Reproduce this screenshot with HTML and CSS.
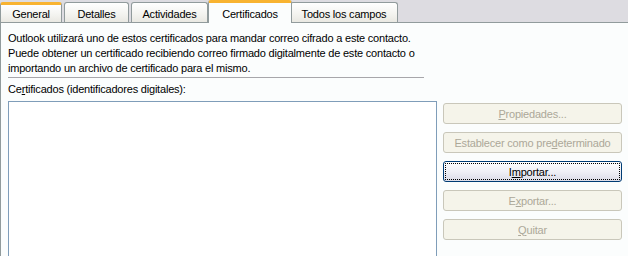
FILE: index.html
```html
<!DOCTYPE html>
<html lang="es">
<head>
<meta charset="utf-8">
<title>Certificados</title>
<link rel="stylesheet" href="styles.css">
</head>
<body>
<div class="tabs">
  <div class="tab hover">General</div>
  <div class="tab">Detalles</div>
  <div class="tab">Actividades</div>
  <div class="tab selected">Certificados</div>
  <div class="tab">Todos los campos</div>
</div>
<div class="panel">
  <p class="intro">Outlook utilizará uno de estos certificados para mandar correo cifrado a este contacto.<br>Puede obtener un certificado recibiendo correo firmado digitalmente de este contacto o<br>importando un archivo de certificado para el mismo.</p>
  <hr class="sep">
  <div class="label">Ce<u>r</u>tificados (identificadores digitales):</div>
  <div class="main">
    <div class="list"></div>
    <div class="buttons">
      <button class="btn" disabled><u>P</u>ropiedades...</button>
      <button class="btn" disabled>Establecer como pre<u>d</u>eterminado</button>
      <button class="btn focus">I<u>m</u>portar...</button>
      <button class="btn" disabled>E<u>x</u>portar...</button>
      <button class="btn" disabled><u>Q</u>uitar</button>
    </div>
  </div>
</div>
</body>
</html>
```
FILE: styles.css
```css
html, body {
  margin: 0;
  padding: 0;
  height: 256px;
  overflow: hidden;
}
body {
  font-family: "Liberation Sans", Arial, sans-serif;
  font-size: 11px;
  letter-spacing: -0.2px;
  color: #000;
  background: #fbfdfd;
}
.tabs {
  display: flex;
  align-items: flex-end;
  height: 23px;
  background: #dddce1;
  border-bottom: 1px solid #919b9c;
  box-sizing: border-box;
}
.tab {
  box-sizing: border-box;
  height: 20px;
  margin-right: 2px;
  padding: 5px 0 0;
  line-height: 13px;
  border: 1px solid #919b9c;
  border-bottom: none;
  border-radius: 3px 3px 0 0;
  background: linear-gradient(#ffffff, #f3f3ef 60%, #e9e8e2);
  text-align: center;
  white-space: nowrap;
}
.tab:nth-child(1) { width: 62px; }
.tab:nth-child(2) { width: 65px; }
.tab:nth-child(3) { width: 77px; }
.tab:nth-child(5) { width: 108px; }
.tab.hover {
  border-top: 3px solid #f8b330;
  padding-top: 3px;
}
.tab.selected {
  width: 84px;
  height: 23px;
  margin: 0 0 -1px -2px;
  padding-top: 5px;
  background: #fbfdfd;
  border-top: 3px solid #f8b330;
  position: relative;
  z-index: 1;
}
.tab.selected + .tab { margin-left: -2px; }
.panel {
  border-left: 1px solid #919b9c;
  padding: 8px 0 0 7px;
  height: 233px;
  box-sizing: border-box;
}
.intro {
  margin: 0;
  line-height: 15px;
}
.sep {
  width: 416px;
  margin: 1px 0 0 0;
  border: none;
  border-top: 1px solid #a7a6aa;
  height: 0;
}
.label {
  margin-top: 4px;
  line-height: 15px;
}
.main {
  display: flex;
  margin-top: 4px;
  gap: 6px;
}
.list {
  width: 429px;
  height: 160px;
  box-sizing: border-box;
  border: 1px solid #7f9db9;
  background: #fff;
}
.buttons {
  display: flex;
  flex-direction: column;
  gap: 8px;
  padding-top: 2px;
}
.btn {
  width: 179px;
  height: 21px;
  box-sizing: border-box;
  font: inherit;
  letter-spacing: inherit;
  border-radius: 3px;
  border: 1px solid #c9c7ba;
  background: #f5f4ea;
  color: #aca899;
  padding: 0;
}
.btn.focus {
  color: #000;
  border: 1px solid #003c74;
  background: linear-gradient(#ffffff, #f0f0f6 50%, #dcdce8);
  outline: 1px dotted #000;
  outline-offset: -3px;
}
```
